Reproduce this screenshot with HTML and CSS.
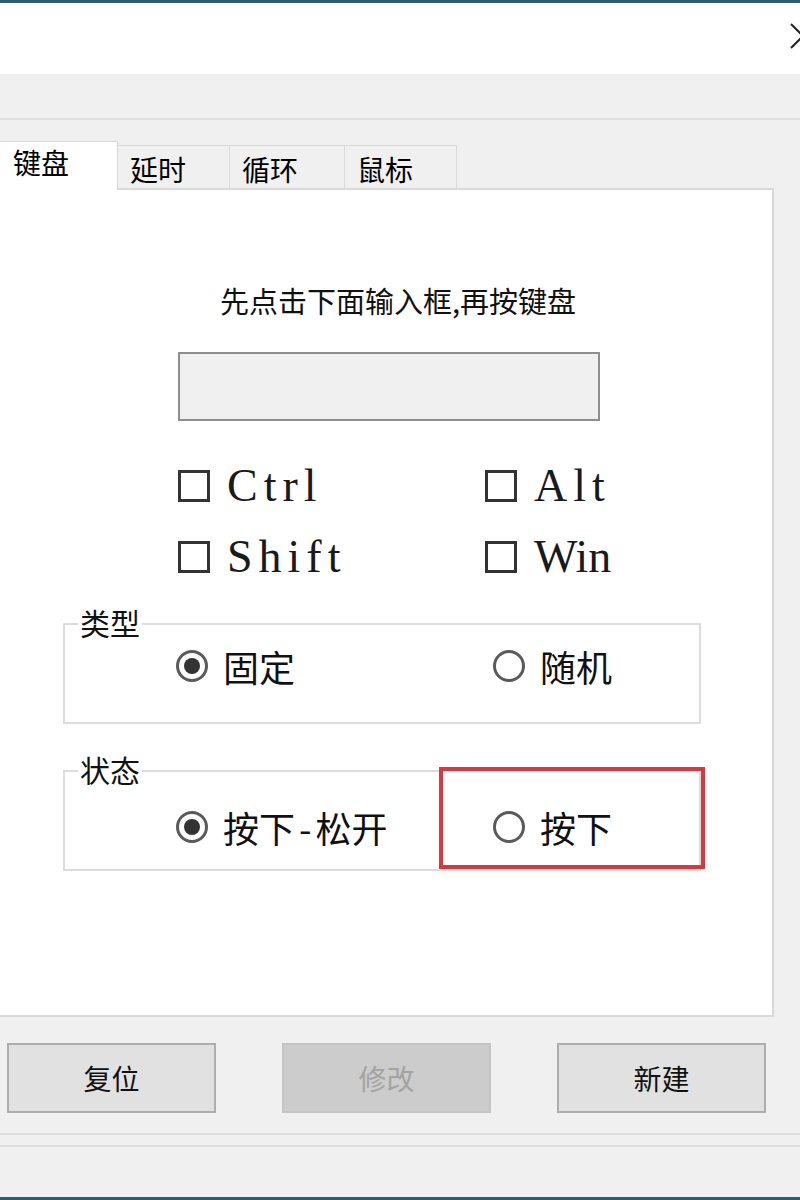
FILE: index.html
```html
<!DOCTYPE html>
<html lang="zh-CN">
<head>
<meta charset="utf-8">
<title>键盘</title>
<link rel="stylesheet" href="styles.css">
</head>
<body>
<div class="window">
  <div class="titlebar">
    <svg class="close" width="26" height="26" viewBox="0 0 26 26" aria-hidden="true">
      <path d="M1 1 L25 25 M25 1 L1 25" stroke="#222" stroke-width="2" fill="none"/>
    </svg>
  </div>
  <div class="toolbar"></div>

  <div class="tabs">
    <div class="tab tab-active">键盘</div>
    <div class="tab tab-2">延时</div>
    <div class="tab tab-3">循环</div>
    <div class="tab tab-4">鼠标</div>
  </div>

  <div class="panel">
    <div class="hint">先点击下面输入框,再按键盘</div>
    <div class="keyinput"></div>

    <div class="mods">
      <label class="mod"><span class="checkbox"></span><span class="mod-text">Ctrl</span></label>
      <label class="mod"><span class="checkbox"></span><span class="mod-text">Alt</span></label>
      <label class="mod"><span class="checkbox"></span><span class="mod-text">Shift</span></label>
      <label class="mod"><span class="checkbox"></span><span class="mod-text mod-text-wide">Win</span></label>
    </div>

    <fieldset class="group group-type">
      <legend class="group-title">类型</legend>
      <div class="radios">
        <label class="radio"><span class="radio-dot checked"></span><span class="radio-text">固定</span></label>
        <label class="radio"><span class="radio-dot"></span><span class="radio-text">随机</span></label>
      </div>
    </fieldset>

    <fieldset class="group group-state">
      <legend class="group-title">状态</legend>
      <div class="radios">
        <label class="radio"><span class="radio-dot checked"></span><span class="radio-text">按下<span class="dash">-</span>松开</span></label>
        <label class="radio"><span class="radio-dot"></span><span class="radio-text">按下</span></label>
      </div>
    </fieldset>

    <div class="highlight"></div>
  </div>

  <div class="buttons">
    <div class="btn">复位</div>
    <div class="btn btn-disabled">修改</div>
    <div class="btn">新建</div>
  </div>

  <div class="sep"></div>
  <div class="sep sep-2"></div>
  <div class="bottom"></div>
</div>
</body>
</html>
```

FILE: styles.css
```css
html, body {
  margin: 0;
  padding: 0;
}
body {
  width: 800px;
  height: 1200px;
  overflow: hidden;
  background: #f0f0f0;
  font-family: "Noto Sans CJK SC", "Noto Sans", sans-serif;
  color: #000;
}
.window {
  width: 800px;
  height: 1200px;
  display: flex;
  flex-direction: column;
}
.titlebar {
  box-sizing: border-box;
  height: 74px;
  border-top: 3px solid #2d5b78;
  background: #fff;
  display: flex;
  justify-content: flex-end;
  align-items: flex-start;
  padding-top: 20px;
}
.close {
  display: block;
  margin-right: -16px;
  flex: none;
}
.toolbar {
  height: 44px;
  border-bottom: 2px solid #dedede;
  background: #f0f0f0;
}
.tabs {
  display: flex;
  align-items: flex-end;
  height: 49px;
  margin-top: 21px;
  margin-bottom: -2px;
  position: relative;
  z-index: 1;
}
.tab {
  box-sizing: border-box;
  height: 43px;
  margin-bottom: 2px;
  border: 1px solid #d9d9d9;
  border-bottom: none;
  border-left: none;
  background: #f0f0f0;
  font-size: 28px;
  line-height: 36px;
  padding: 5px 0 0 12px;
}
.tab-active {
  height: 49px;
  margin-bottom: 0;
  width: 118px;
  background: #fff;
  padding: 2px 0 0 13px;
}
.tab-2 { width: 112px; }
.tab-3 { width: 115px; }
.tab-4 { width: 112px; }

.panel {
  position: relative;
  box-sizing: border-box;
  width: 774px;
  height: 829px;
  background: #fff;
  border: 2px solid #d9d9d9;
  border-left: none;
  padding-top: 92px;
}
.hint {
  font-size: 29px;
  line-height: 36px;
  text-align: center;
  padding-left: 24px;
  color: #111;
}
.keyinput {
  box-sizing: border-box;
  margin: 34px 0 0 178px;
  width: 422px;
  height: 69px;
  background: #f0f0f0;
  border: 2px solid #8e8e8e;
}
.mods {
  display: grid;
  grid-template-columns: 307px auto;
  row-gap: 35px;
  margin: 47px 0 0 178px;
}
.mod {
  display: flex;
  align-items: center;
  gap: 17px;
  height: 36px;
}
.checkbox {
  box-sizing: border-box;
  width: 32px;
  height: 32px;
  border: 3px solid #333;
  background: #fff;
  flex: none;
}
.mod-text {
  font-family: "Liberation Serif", "DejaVu Serif", serif;
  font-size: 46px;
  line-height: 36px;
  letter-spacing: 6px;
  color: #1a1a1a;
}
.mod-text-wide {
  letter-spacing: 0;
}

.group {
  box-sizing: border-box;
  width: 638px;
  margin: 0 0 0 63px;
  padding: 0;
  border: 2px solid #dcdcdc;
  min-width: 0;
}
.group-type {
  margin-top: 33px;
  padding: 8px 0 38px 0;
}
.group-state {
  margin-top: 31px;
  padding: 22px 0 24px 0;
}
.group-title {
  font-size: 30px;
  line-height: 28px;
  padding: 0 2px 4px 2px;
  margin-left: 13px;
  color: #111;
}
.radios {
  display: grid;
  grid-template-columns: 317px auto;
  padding-left: 111px;
}
.radio {
  display: flex;
  align-items: center;
  gap: 15px;
  height: 36px;
}
.radio-dot {
  box-sizing: border-box;
  width: 32px;
  height: 32px;
  border: 3px solid #5a5a5a;
  border-radius: 50%;
  background: #fff;
  flex: none;
  display: flex;
  align-items: center;
  justify-content: center;
}
.radio-dot.checked::after {
  content: "";
  width: 16px;
  height: 16px;
  border-radius: 50%;
  background: #333;
}
.radio-text {
  font-size: 36px;
  line-height: 36px;
  color: #111;
}
.dash {
  display: inline-block;
  padding: 0 4px;
}
.highlight {
  position: absolute;
  left: 439px;
  top: 577px;
  box-sizing: border-box;
  width: 266px;
  height: 102px;
  border: 4px solid #d63a40;
}

.buttons {
  display: flex;
  gap: 66px;
  padding-left: 7px;
  margin-top: 26px;
}
.btn {
  box-sizing: border-box;
  width: 209px;
  height: 70px;
  background: #e1e1e1;
  border: 2px solid #adadad;
  font-size: 28px;
  display: flex;
  align-items: center;
  justify-content: center;
  color: #111;
}
.btn-disabled {
  background: #cccccc;
  border-color: #c4c4c4;
  color: #a3a3a3;
}
.sep {
  margin-top: 20px;
  border-top: 2px solid #dedede;
}
.sep-2 {
  margin-top: 10px;
}
.bottom {
  flex: 1;
  border-bottom: 3px solid #2d5b78;
}
```
